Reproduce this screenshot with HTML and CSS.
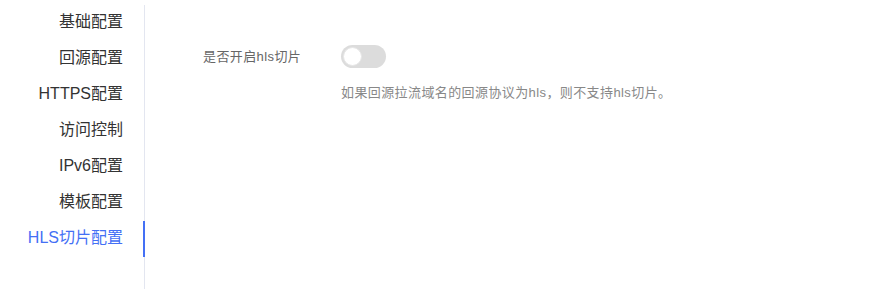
FILE: index.html
```html
<!DOCTYPE html>
<html lang="zh-CN">
<head>
<meta charset="utf-8">
<title>HLS切片配置</title>
<link rel="stylesheet" href="styles.css">
</head>
<body>
<div class="page">
  <nav class="side-menu">
    <div class="menu-item">基础配置</div>
    <div class="menu-item">回源配置</div>
    <div class="menu-item">HTTPS配置</div>
    <div class="menu-item">访问控制</div>
    <div class="menu-item">IPv6配置</div>
    <div class="menu-item">模板配置</div>
    <div class="menu-item active">HLS切片配置</div>
  </nav>
  <main class="content">
    <div class="form-row">
      <label class="form-label">是否开启hls切片</label>
      <span class="switch"><span class="knob"></span></span>
    </div>
    <div class="form-help">如果回源拉流域名的回源协议为hls，则不支持hls切片。</div>
  </main>
</div>
</body>
</html>
```
FILE: styles.css
```css
html, body {
  margin: 0;
  padding: 0;
  background: #fff;
}
body {
  font-family: "Liberation Sans", "Noto Sans CJK SC", sans-serif;
  color: #333;
}
.page {
  display: flex;
  height: 289px;
}
.side-menu {
  width: 123px;
  padding-right: 21px;
  margin-top: 5px;
  border-right: 1px solid #e3e6f0;
  display: flex;
  flex-direction: column;
}
.menu-item {
  position: relative;
  height: 36px;
  line-height: 34px;
  font-size: 16px;
  text-align: right;
  color: #333;
  white-space: nowrap;
}
.menu-item.active {
  color: #4470f5;
}
.menu-item.active::after {
  content: "";
  position: absolute;
  top: 0;
  right: -22px;
  width: 2px;
  height: 36px;
  background: #4470f5;
}
.content {
  padding: 45px 0 0 58px;
  font-size: 13px;
  letter-spacing: 0.4px;
}
.form-row {
  display: flex;
  align-items: center;
  height: 23px;
}
.form-label {
  width: 138px;
  color: #666;
  line-height: 23px;
}
.switch {
  position: relative;
  display: inline-block;
  width: 45px;
  height: 23px;
  border-radius: 12px;
  background: #dcdcdc;
}
.knob {
  position: absolute;
  top: 2px;
  left: 2px;
  width: 19px;
  height: 19px;
  box-sizing: border-box;
  border-radius: 50%;
  background: #fff;
  border: 1px solid #e6e6e6;
}
.form-help {
  margin: 15px 0 0 138px;
  line-height: 20px;
  color: #888;
}
```
